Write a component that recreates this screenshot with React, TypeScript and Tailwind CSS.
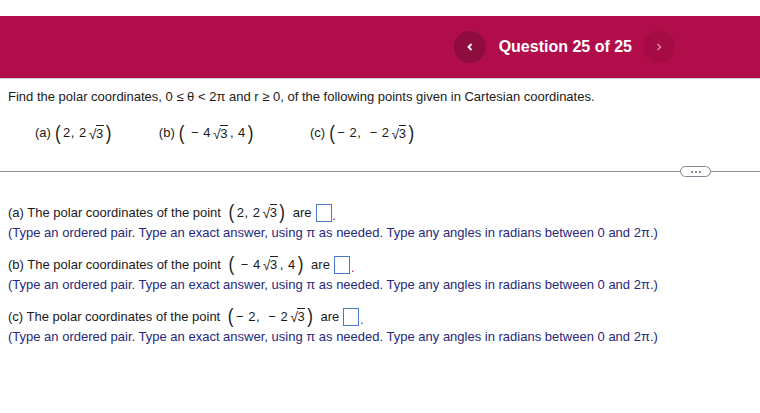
import React from "react";

const Sqrt = ({ children }: { children: React.ReactNode }) => (
  <span className="inline-flex items-end">
    <span className="text-[14px] leading-none">√</span>
    <span className="border-t border-[#222] leading-[14px] pt-[1px] -ml-[1px]">{children}</span>
  </span>
);

const Paren = ({ c }: { c: string }) => (
  <span className="inline-block text-[17px] leading-none scale-y-[1.2]">{c}</span>
);

const MathA = () => (
  <span className="inline-flex items-center gap-[2px] text-[13px] tracking-[0.5px]">
    <Paren c="(" />
    <span>2,&nbsp;2</span>
    <Sqrt>3</Sqrt>
    <Paren c=")" />
  </span>
);

const MathB = () => (
  <span className="inline-flex items-center gap-[2px] text-[13px] tracking-[0.5px]">
    <Paren c="(" />
    <span>&nbsp;−&nbsp;4</span>
    <Sqrt>3</Sqrt>
    <span>,&nbsp;4</span>
    <Paren c=")" />
  </span>
);

const MathC = () => (
  <span className="inline-flex items-center gap-[2px] text-[13px] tracking-[0.5px]">
    <Paren c="(" />
    <span>−&nbsp;2,&nbsp;&nbsp;−&nbsp;2</span>
    <Sqrt>3</Sqrt>
    <Paren c=")" />
  </span>
);

const Box = () => (
  <span className="inline-flex items-end">
    <span className="inline-block w-[16px] h-[18px] border-[1.5px] border-[#4a78c8] bg-white ml-[4px]" />
    <span className="text-[#7a1040] text-[12px] leading-none ml-[1px]">.</span>
  </span>
);

const Part = ({ label, math }: { label: string; math: React.ReactNode }) => (
  <div className="flex flex-col">
    <div className="flex items-center h-[20px] text-[13px] text-[#1a1a1a]">
      <span>({label}) The polar coordinates of the point&nbsp;</span>
      <span className="ml-[4px]">{math}</span>
      <span>&nbsp;&nbsp;are</span>
      <Box />
    </div>
    <div className="text-[13px] text-[#27297a] leading-[18px] mt-[1px]">
      (Type an ordered pair. Type an exact answer, using π as needed. Type any angles in radians between 0 and 2π.)
    </div>
  </div>
);

export default function App() {
  return (
    <div className="w-[760px] h-[413px] bg-white overflow-hidden text-[#1a1a1a]" style={{ fontFamily: '"Liberation Sans", Arial, sans-serif' }}>
      <div className="h-[16px]" />
      <div className="h-[62px] bg-[#b00d4a] flex items-center justify-end pr-[85px]">
        <div className="w-[32px] h-[32px] rounded-full bg-[#8f0c3f] flex items-center justify-center">
          <svg width="10" height="10" viewBox="0 0 10 10"><path d="M6.5 2 L3.5 5 L6.5 8" stroke="white" strokeWidth="1.8" fill="none" /></svg>
        </div>
        <div className="ml-[13px] text-white font-bold text-[16px]">Question 25 of 25</div>
        <div className="ml-[11px] w-[32px] h-[32px] rounded-full bg-[#a50c45] flex items-center justify-center">
          <svg width="10" height="10" viewBox="0 0 10 10"><path d="M3.5 2 L6.5 5 L3.5 8" stroke="#e0809e" strokeWidth="1.6" fill="none" /></svg>
        </div>
      </div>
      <div className="h-[1px] bg-[#c9c9cf]" />
      <div className="px-[8px] pt-[10px]">
        <div className="text-[13px] leading-[16px]">
          Find the polar coordinates, 0 ≤ θ &lt; 2π and r ≥ 0, of the following points given in Cartesian coordinates.
        </div>
        <div className="flex items-center mt-[15px] h-[26px] text-[13px]">
          <div className="ml-[27px] flex items-center gap-[4px]"><span>(a)</span><MathA /></div>
          <div className="ml-[47px] flex items-center gap-[4px]"><span>(b)</span><MathB /></div>
          <div className="ml-[56px] flex items-center gap-[4px]"><span>(c)</span><MathC /></div>
        </div>
      </div>
      <div className="mt-[20px] flex items-center">
        <div className="h-[1px] bg-[#8a9098] w-[680px]" />
        <div className="w-[31px] h-[11px] rounded-full border border-[#7d8590] flex items-center justify-center gap-[2px] bg-white">
          <span className="w-[2px] h-[2px] bg-[#555c66] rounded-full" />
          <span className="w-[2px] h-[2px] bg-[#555c66] rounded-full" />
          <span className="w-[2px] h-[2px] bg-[#555c66] rounded-full" />
        </div>
        <div className="h-[1px] bg-[#8a9098] flex-1" />
      </div>
      <div className="px-[8px] mt-[26px] flex flex-col gap-[13px]">
        <Part label="a" math={<MathA />} />
        <Part label="b" math={<MathB />} />
        <Part label="c" math={<MathC />} />
      </div>
    </div>
  );
}
